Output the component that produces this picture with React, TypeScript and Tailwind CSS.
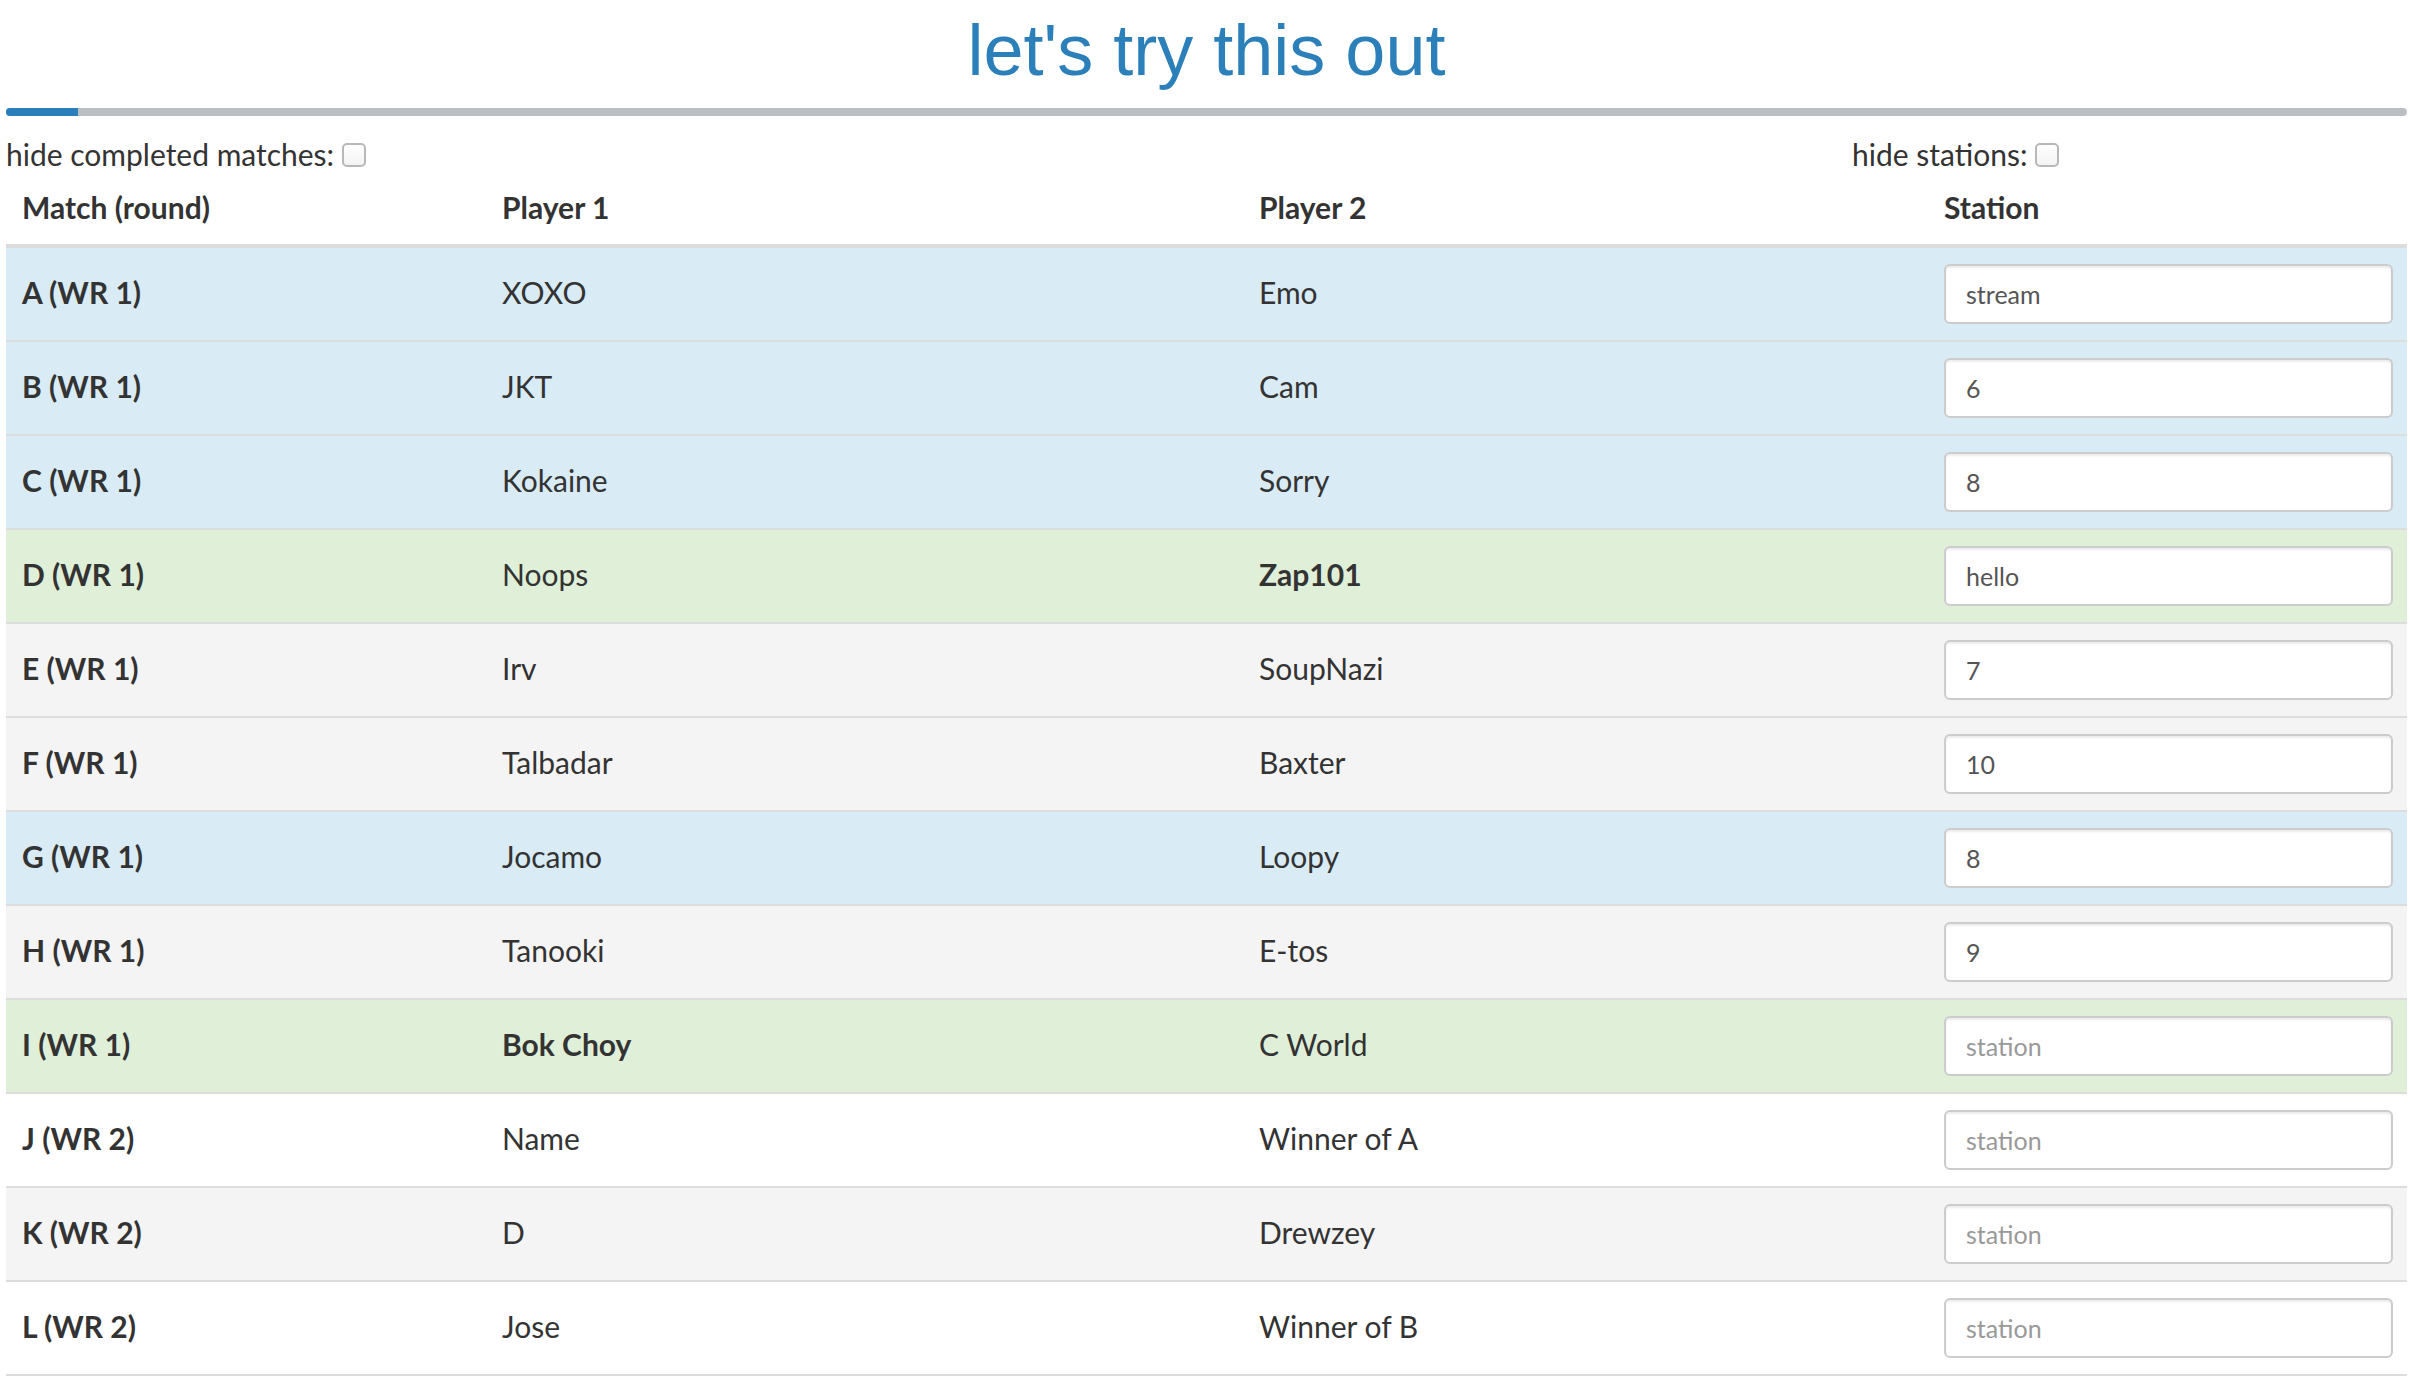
import React from "react";

type Row = {
  m: string;
  p1: string;
  p2: string;
  st: string;
  bg: string;
  b1?: boolean;
  b2?: boolean;
};

const rows: Row[] = [
  { m: "A (WR 1)", p1: "XOXO", p2: "Emo", st: "stream", bg: "bg-[#d9ebf5]" },
  { m: "B (WR 1)", p1: "JKT", p2: "Cam", st: "6", bg: "bg-[#d9ebf5]" },
  { m: "C (WR 1)", p1: "Kokaine", p2: "Sorry", st: "8", bg: "bg-[#d9ebf5]" },
  { m: "D (WR 1)", p1: "Noops", p2: "Zap101", st: "hello", bg: "bg-[#dfefd8]", b2: true },
  { m: "E (WR 1)", p1: "Irv", p2: "SoupNazi", st: "7", bg: "bg-[#f4f4f4]" },
  { m: "F (WR 1)", p1: "Talbadar", p2: "Baxter", st: "10", bg: "bg-[#f4f4f4]" },
  { m: "G (WR 1)", p1: "Jocamo", p2: "Loopy", st: "8", bg: "bg-[#d9ebf5]" },
  { m: "H (WR 1)", p1: "Tanooki", p2: "E-tos", st: "9", bg: "bg-[#f4f4f4]" },
  { m: "I (WR 1)", p1: "Bok Choy", p2: "C World", st: "", bg: "bg-[#dfefd8]", b1: true },
  { m: "J (WR 2)", p1: "Name", p2: "Winner of A", st: "", bg: "bg-white" },
  { m: "K (WR 2)", p1: "D", p2: "Drewzey", st: "", bg: "bg-[#f4f4f4]" },
  { m: "L (WR 2)", p1: "Jose", p2: "Winner of B", st: "", bg: "bg-white" },
];

function Toggle({ label }: { label: string }) {
  return (
    <div className="flex items-center gap-[8px]">
      <span>{label}</span>
      <span className="w-[24px] h-[24px] rounded-[5px] border-2 border-[#b8b8b8] bg-gradient-to-b from-white to-[#f3f3f3]" />
    </div>
  );
}

export default function App() {
  return (
    <div className="min-h-[1380px] bg-white pl-[6px] pr-[3px] text-[#333] font-['Lato','Open_Sans',sans-serif] text-[30px]">
      <h1 className="pt-[11px] text-center font-['Liberation_Sans',Arial,sans-serif] text-[72px] leading-[1.1] text-[#2c80b9] font-normal">
        let's try this out
      </h1>
      <div className="mt-[18px] h-[8px] rounded-[4px] bg-[#babfc4] overflow-hidden">
        <div className="h-full w-[72px] bg-[#2a7fba]" />
      </div>
      <div className="grid grid-cols-[1846px_1fr] items-center h-[53px] pt-[17px] leading-[43px]">
        <Toggle label="hide completed matches:" />
        <Toggle label="hide stations:" />
      </div>
      <div className="grid grid-cols-[480px_757px_685px_1fr] h-[79px] pt-[2px] border-b-4 border-[#ddd] font-bold items-center leading-[43px]">
        <div className="px-[16px]">Match (round)</div>
        <div className="px-[16px]">Player 1</div>
        <div className="px-[16px]">Player 2</div>
        <div className="px-[16px]">Station</div>
      </div>
      {rows.map((r, i) => (
        <div
          key={r.m}
          className={`grid grid-cols-[480px_757px_685px_1fr] items-center ${r.bg} ${
            i === 0 ? "h-[92px]" : "h-[94px] border-t-2 border-[#ddd]"
          }`}
        >
          <div className="px-[16px] pb-[4px] font-bold">{r.m}</div>
          <div className={`px-[16px] pb-[4px] ${r.b1 ? "font-bold" : ""}`}>{r.p1}</div>
          <div className={`px-[16px] pb-[4px] ${r.b2 ? "font-bold" : ""}`}>{r.p2}</div>
          <div className="pl-[16px] pr-[14px]">
            <input
              readOnly
              value={r.st}
              placeholder="station"
              className="block w-full h-[60px] rounded-[6px] border-2 border-[#cccccc] bg-white px-[20px] text-[25px] text-[#555] placeholder:text-[#999] shadow-[inset_0_2px_2px_rgba(0,0,0,0.075)] outline-none font-['Lato','Open_Sans',sans-serif]"
            />
          </div>
        </div>
      ))}
      <div className="border-t-2 border-[#ddd] h-[10px]" />
    </div>
  );
}
